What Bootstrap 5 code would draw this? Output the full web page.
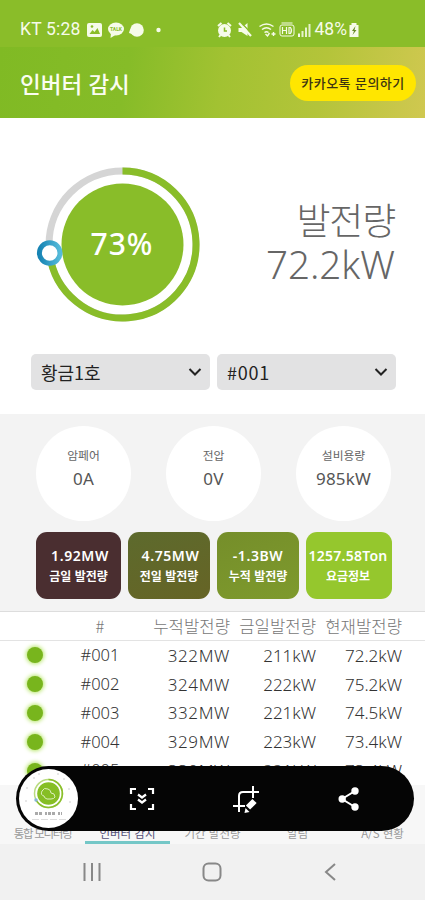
<!DOCTYPE html>
<html lang="ko">
<head>
<meta charset="utf-8">
<meta name="viewport" content="width=device-width, initial-scale=1">
<title>인버터 감시</title>
<link href="https://cdn.jsdelivr.net/npm/bootstrap@5.3.0/dist/css/bootstrap.min.css" rel="stylesheet">
<style>
body{width:425px;height:900px;font-family:"Noto Sans","Noto Sans CJK KR",sans-serif;color:#555;background:#fff;line-height:1}
svg{display:block;flex:none}
.screen{width:425px;height:900px}
.statusbar{height:47px;background:#8abd29;font-family:Roboto,sans-serif;font-size:17.5px;color:#f6fbe9;padding:12px 65px 0 20px}
.statusbar .clock{letter-spacing:.2px}
.titlebar{height:71px;background:linear-gradient(100deg,#80ba24 0%,#86bc28 30%,#a2c232 52%,#b4c43a 75%,#d0c850 100%);padding:0 9px 0 20px}
.titlebar h1{font:500 22.5px "Noto Sans CJK KR",sans-serif;color:#fafdf0}
.talk{width:126px;height:36px;border-radius:18px;background:#ffe600;color:#3c3412;font:500 13px "Noto Sans CJK KR",sans-serif;letter-spacing:.45px;white-space:nowrap}
.gauge{height:236px;padding:40px 30px 0 33px}
.power{color:#666;font-weight:300;font-size:39px;padding-top:39px}
.power .k{font-family:"Noto Sans CJK KR",sans-serif;font-size:37px;line-height:45px;letter-spacing:-1.2px}
.power .n{line-height:45px;letter-spacing:0;font-size:38.5px}
.pick{height:60px;padding:0 29px 0 31px;gap:7px}
.pick>div{height:36px;border-radius:5px;background:#e2e2e3;color:#222;font:400 18px "Noto Sans CJK KR",sans-serif;padding:0 8px 0 10px}
.pick .num{letter-spacing:.8px}
.stats{height:197px;background:#f3f3f3;padding:12px 34px 0 36px}
.bubble{width:95px;height:95px;background:#fff;padding-top:22px}
.bubble small{font:400 11.8px/14px "Noto Sans CJK KR",sans-serif;color:#666}
.bubble b{font-weight:400;font-size:17px;line-height:33px;color:#555;letter-spacing:.2px}
.tiles{display:grid;grid-template-columns:85px 82px 82px 86px;gap:7px;margin-top:11px}
.tile{height:67px;border-radius:11px;color:#fff;padding-top:14px;white-space:nowrap}
.tile b{font-weight:600;font-size:14px;line-height:20px;letter-spacing:.6px}
.t1 b,.t2 b{padding-left:3px}
.t4 b{letter-spacing:.25px;margin-left:-2px}
.tile span{font:700 12px/20px "Noto Sans CJK KR",sans-serif}
.t4 span{margin-left:-2px}
.t1{background:#4a2e30}.t2{background:linear-gradient(160deg,#5d6a2d,#666425)}.t3{background:linear-gradient(160deg,#758e2a,#7e9a2d)}.t4{background:#95c72d}
.listing{height:174px}
.line{display:grid;grid-template-columns:69px 62px 99px 86px 86px;height:28.8px;align-items:center;text-align:right;font-size:17px;font-weight:300;color:#333;white-space:nowrap}
.line span:nth-child(3){letter-spacing:.6px}
.line span:nth-child(2){font-size:16.5px}
.heads{height:30px;border-top:1px solid #ddd;border-bottom:1px solid #e3e3e3;font:300 16.7px "Noto Sans CJK KR",sans-serif;color:#777}
.heads span:nth-child(3){letter-spacing:0}
.lamp{width:16px;height:16px;border-radius:50%;background:#78b51d;box-shadow:0 0 4px 1px #b2e45f;justify-self:center}
.tabs{height:59px;background:#f7f7f7;font:400 11.5px "Noto Sans CJK KR",sans-serif;color:#999;white-space:nowrap}
.tabs>div{width:85.300px;height:59px;border-bottom:3px solid transparent}
.tabs>.long{letter-spacing:-1.300px}
.tabs>.on{color:#555078;border-color:#74c7c7}
.sysnav{height:56px;background:#f1f1f1;padding:0 84px 0 82px}
.shotbar{left:16px;top:766px;width:398px;height:65px;border-radius:33px;background:#050505}
.shotbar .thumb{margin-left:3px}
</style>
<script src="https://cdn.jsdelivr.net/npm/bootstrap@5.3.0/dist/js/bootstrap.bundle.min.js"></script>
</head>
<body>
<main class="screen position-relative overflow-hidden d-flex flex-column">
 <div class="statusbar d-flex justify-content-between">
  <div class="d-flex align-items-center h-100"><span class="clock">KT 5:28</span>
   <svg width="78" height="18" viewBox="0 0 78 18" style="margin-left:6px"><rect x="0" y="2" width="15" height="14" rx="2" fill="#f6fbe9"/><path d="M2.500 13 L5.500 9 L7.500 11 L10.500 7 L13 13 Z" fill="#8abd29"/><circle cx="5" cy="5.500" r="1.300" fill="#8abd29"/><ellipse cx="29" cy="8" rx="8" ry="6.500" fill="#f6fbe9"/><path d="M24 12 L23.500 17 L30 13 Z" fill="#f6fbe9"/><text x="29" y="10" font-size="5" font-weight="700" text-anchor="middle" fill="#8abd29">TALK</text><circle cx="50" cy="9" r="6.800" fill="#f6fbe9"/><path d="M42 12 Q43 7 46 6 L48 14 Z" fill="#f6fbe9"/><circle cx="71.500" cy="9" r="2.200" fill="#f6fbe9"/></svg>
  </div>
  <div class="d-flex align-items-center h-100">
   <svg width="99" height="20" viewBox="0 0 98 20" fill="none" stroke="#f6fbe9"><circle cx="8" cy="10.500" r="5" fill="#f6fbe9" stroke-width="3"/><path d="M1.500 6 L5 3 M11 3 L14.500 6 M4 15 L2.500 17 M12 15 L13.500 17" stroke-width="2"/><path d="M8 7.500 V11 H10.500" stroke="#8abd29" stroke-width="1.500"/><path d="M22 8 H25 L31 3 V16 L25 12 H22 Z" fill="#f6fbe9" stroke="none"/><path d="M24.500 2.500 L35 13.500" stroke="#8abd29" stroke-width="1.500"/><path d="M22.500 3 L34.500 16" stroke-width="2.200"/><path d="M43 6.500 Q50 1.500 57 6.500 M45.500 9.500 Q50 6 54.500 9.500 M48 12.500 Q50 11 52 12.500" stroke-width="1.500"/><path d="M49 14 L51 16 L53 13 M55 14 H59 M57 12 V16" stroke-width="1.400"/><rect x="63.500" y="5" width="14" height="11" rx="2"/><path d="M66 7 V14 M66 10.500 H70 M70 7 V14 M72.500 7.500 V13.500 H74 Q76 10.500 74 7.500 Z M65 3 H76" stroke-width="1.200"/><path d="M82.500 13.500 V17" stroke-width="2"/><path d="M86 11 V17 M89.500 7.500 V17 M93 4 V17" stroke-width="2" opacity=".85"/></svg>
   <span>48%</span>
   <svg width="12" height="18" viewBox="0 0 11 18" style="margin-left:1px"><path d="M3 2 H8 V4 H10 V16 H1 V4 H3 Z" fill="#f6fbe9"/><path d="M7 5 L3.500 10 H5.500 L4 14 L8 9 H6 Z" fill="#668a24"/></svg>
  </div>
 </div>
 <header class="titlebar d-flex align-items-center justify-content-between">
  <h1 class="m-0">인버터 감시</h1>
  <div class="talk d-flex align-items-center justify-content-center">카카오톡 문의하기</div>
 </header>
 <section class="gauge d-flex justify-content-between">
  <svg width="170" height="170" viewBox="33 158 170 170">
   <circle cx="122.500" cy="244.500" r="73.500" fill="none" stroke="#d5d5d5" stroke-width="7"/>
   <path d="M122.500 171 A73.500 73.500 0 1 1 49.600 253.700" fill="none" stroke="#89bd29" stroke-width="7"/>
   <circle cx="122.500" cy="244.500" r="61" fill="#89bd29"/>
   <defs><linearGradient id="kn"><stop offset="0" stop-color="#1784b4"/><stop offset="1" stop-color="#55bbda"/></linearGradient></defs>
   <circle cx="49.700" cy="253" r="10.300" fill="#fff" stroke="url(#kn)" stroke-width="5"/>
   <text x="122" y="255" text-anchor="middle" font-size="30" font-weight="500" letter-spacing="1" fill="#fff">73%</text>
  </svg>
  <div class="power text-end"><div class="k">발전량</div><div class="n">72.2kW</div></div>
 </section>
 <section class="pick d-flex">
  <div class="flex-fill w-50 d-flex align-items-center justify-content-between"><span>황금1호</span><svg width="14" height="10" viewBox="0 0 14 10"><path d="M1.500 2 L7 7.500 L12.500 2" fill="none" stroke="#222" stroke-width="2"/></svg></div>
  <div class="flex-fill w-50 d-flex align-items-center justify-content-between"><span class="num">#001</span><svg width="14" height="10" viewBox="0 0 14 10"><path d="M1.500 2 L7 7.500 L12.500 2" fill="none" stroke="#222" stroke-width="2"/></svg></div>
 </section>
 <section class="stats">
  <div class="d-flex justify-content-between">
   <div class="bubble rounded-circle d-flex flex-column align-items-center"><small>암페어</small><b>0A</b></div>
   <div class="bubble rounded-circle d-flex flex-column align-items-center"><small>전압</small><b>0V</b></div>
   <div class="bubble rounded-circle d-flex flex-column align-items-center"><small>설비용량</small><b>985kW</b></div>
  </div>
  <div class="tiles">
   <div class="tile t1 d-flex flex-column align-items-center"><b>1.92MW</b><span>금일 발전량</span></div>
   <div class="tile t2 d-flex flex-column align-items-center"><b>4.75MW</b><span>전일 발전량</span></div>
   <div class="tile t3 d-flex flex-column align-items-center"><b>-1.3BW</b><span>누적 발전량</span></div>
   <div class="tile t4 d-flex flex-column align-items-center"><b>1257.58Ton</b><span>요금정보</span></div>
  </div>
 </section>
 <section class="listing overflow-hidden">
  <div class="line heads"><span></span><span class="text-center">#</span><span>누적발전량</span><span>금일발전량</span><span>현재발전량</span></div>
  <div class="line"><i class="lamp"></i><span class="text-center">#001</span><span>322MW</span><span>211kW</span><span>72.2kW</span></div>
  <div class="line"><i class="lamp"></i><span class="text-center">#002</span><span>324MW</span><span>222kW</span><span>75.2kW</span></div>
  <div class="line"><i class="lamp"></i><span class="text-center">#003</span><span>332MW</span><span>221kW</span><span>74.5kW</span></div>
  <div class="line"><i class="lamp"></i><span class="text-center">#004</span><span>329MW</span><span>223kW</span><span>73.4kW</span></div>
  <div class="line"><i class="lamp"></i><span class="text-center">#005</span><span>330MW</span><span>221kW</span><span>73.4kW</span></div>
 </section>
 <nav class="tabs d-flex">
  <div class="long d-flex align-items-end justify-content-center">통합 모니터링</div>
  <div class="on d-flex align-items-end justify-content-center">인버터 감시</div>
  <div class="d-flex align-items-end justify-content-center">기간 발전량</div>
  <div class="d-flex align-items-end justify-content-center">알림</div>
  <div class="d-flex align-items-end justify-content-center">A/S 현황</div>
 </nav>
 <div class="sysnav d-flex align-items-center justify-content-between">
  <svg width="20" height="20" viewBox="0 0 20 20"><path d="M2.500 1 V19 M10 1 V19 M17.500 1 V19" stroke="#888" stroke-width="2"/></svg>
  <svg width="20" height="20" viewBox="0 0 20 20"><rect x="1.500" y="1.500" width="17" height="17" rx="5" fill="none" stroke="#888" stroke-width="2"/></svg>
  <svg width="20" height="20" viewBox="0 0 20 20"><path d="M14 2 L5 10 L14 18" fill="none" stroke="#888" stroke-width="2"/></svg>
 </div>
 <div class="shotbar position-absolute d-flex align-items-center">
  <svg class="thumb" width="59" height="59" viewBox="0 0 59 59"><circle cx="29.500" cy="29.500" r="29.500" fill="#fff"/><circle cx="29.500" cy="24.500" r="14" fill="none" stroke="#b9dc80" stroke-width="1.500"/><path d="M29.500 10.500 A14 14 0 1 1 17 31" fill="none" stroke="#8bbf2c" stroke-width="1.500"/><circle cx="29.500" cy="24.500" r="11.300" fill="#86be25"/><path d="M25 27 Q21 26 23 22 Q25 18 29 20 Q32 21 32 24 Q36 24 36 28 Q35 30 32 30 H28 Q25 29 25 27 Z" fill="none" stroke="#dcefbd"/><circle cx="17" cy="31" r="1.700" fill="#86b6d4"/><g fill="#c8c8c8"><circle cx="8" cy="19" r=".8"/><circle cx="7" cy="32" r=".8"/><circle cx="15" cy="9" r=".8"/><circle cx="20" cy="5" r=".8"/><circle cx="39" cy="5" r=".8"/><circle cx="45" cy="10" r=".8"/><circle cx="50" cy="20" r=".8"/><circle cx="51" cy="33" r=".8"/></g><path d="M16 44.500 H43" stroke="#aaa" stroke-width="3" stroke-dasharray="3 1 3 3 2 1"/><path d="M13 50.500 H47" stroke="#ddd" stroke-dasharray="7 2"/></svg>
  <svg width="26" height="24" viewBox="0 0 26 24" style="margin-left:51px" fill="none" stroke="#fff" stroke-width="2.200"><path d="M2 7 V2 H7 M19 2 H24 V7 M24 17 V22 H19 M7 22 H2 V17"/><path d="M9 7.500 L13 10.500 L17 7.500 M9 12.500 L13 15.500 L17 12.500"/></svg>
  <svg width="28" height="28" viewBox="0 0 28 28" style="margin-left:77px" fill="none" stroke="#fff" stroke-width="2"><path d="M27 7 H11 Q7 7 7 11 V27 M1 21 H13 M21 1 V13"/><path d="M16 22.500 L22.500 16" stroke-width="6"/><path d="M12.500 28 L13.500 23 L17.500 27 Z" fill="#fff" stroke="none"/></svg>
  <svg width="22" height="24" viewBox="0 0 22 24" style="margin-left:78px" fill="#fff"><path d="M17 4 L4 12 L17 20" fill="none" stroke="#fff" stroke-width="2"/><circle cx="4.200" cy="12" r="3.700"/><circle cx="17" cy="4" r="3.700"/><circle cx="17" cy="20" r="3.700"/></svg>
 </div>
</main>
</body>
</html>
